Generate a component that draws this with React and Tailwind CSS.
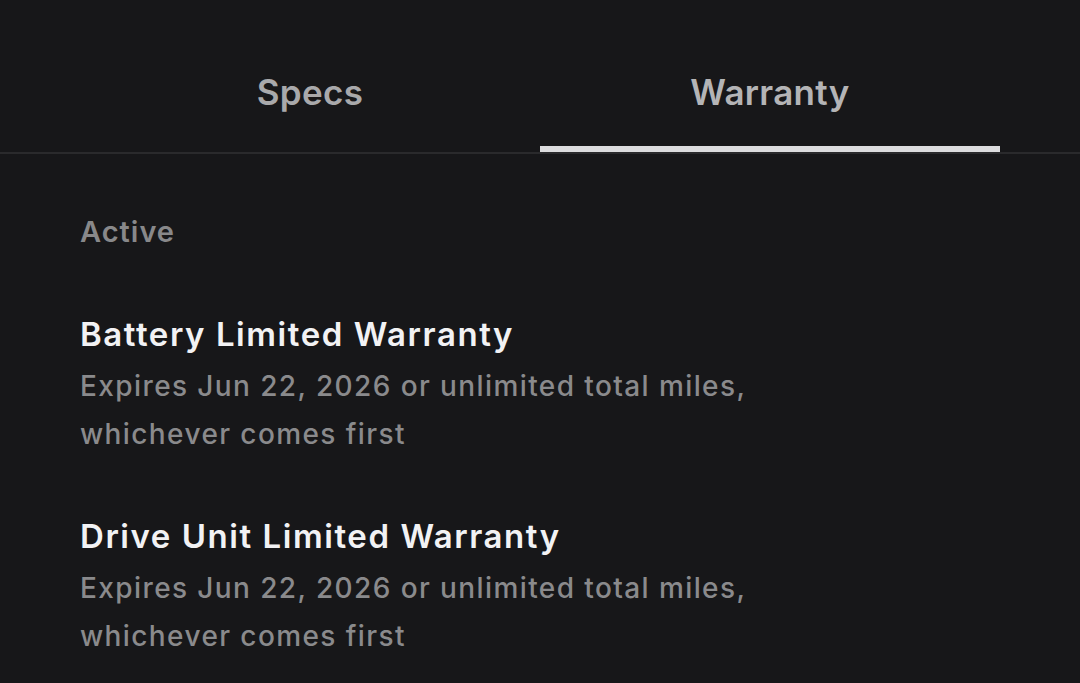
import React from 'react';

const warranties = [
  { title: 'Battery Limited Warranty', text: 'Expires Jun 22, 2026 or unlimited total miles, whichever comes first' },
  { title: 'Drive Unit Limited Warranty', text: 'Expires Jun 22, 2026 or unlimited total miles, whichever comes first' },
];

export default function App() {
  return (
    <div className="w-[1080px] h-[683px] overflow-hidden bg-[#171719] font-['Inter',sans-serif]">
      <div className="border-b-2 border-[#2a2a2c]">
        <div className="flex px-[80px]">
          <button className="flex-1 h-[152px] flex items-center justify-center pt-[32px] text-[35px] tracking-[0.3px] font-semibold text-[#a9a9ab]">
            Specs
          </button>
          <button className="flex-1 h-[152px] relative flex items-center justify-center pt-[32px] text-[35px] tracking-[0.3px] font-semibold text-[#b4b4b6]">
            Warranty
            <span className="absolute left-0 right-0 bottom-0 h-[6px] bg-[#dcdcde]" />
          </button>
        </div>
      </div>

      <div className="px-[80px] pt-[58px]">
        <div className="text-[29px] tracking-[1px] font-semibold text-[#88888a] leading-[40px]">Active</div>
        <div className="mt-[60px] flex flex-col gap-[56px]">
          {warranties.map((w) => (
            <div key={w.title}>
              <div className="text-[33px] tracking-[1.55px] font-semibold text-[#f2f2f4] leading-[44px]">{w.title}</div>
              <p className="mt-[6px] w-[720px] text-[28px] tracking-[1.4px] font-medium text-[#8a8a8c] leading-[48px]">{w.text}</p>
            </div>
          ))}
        </div>
      </div>
    </div>
  );
}
